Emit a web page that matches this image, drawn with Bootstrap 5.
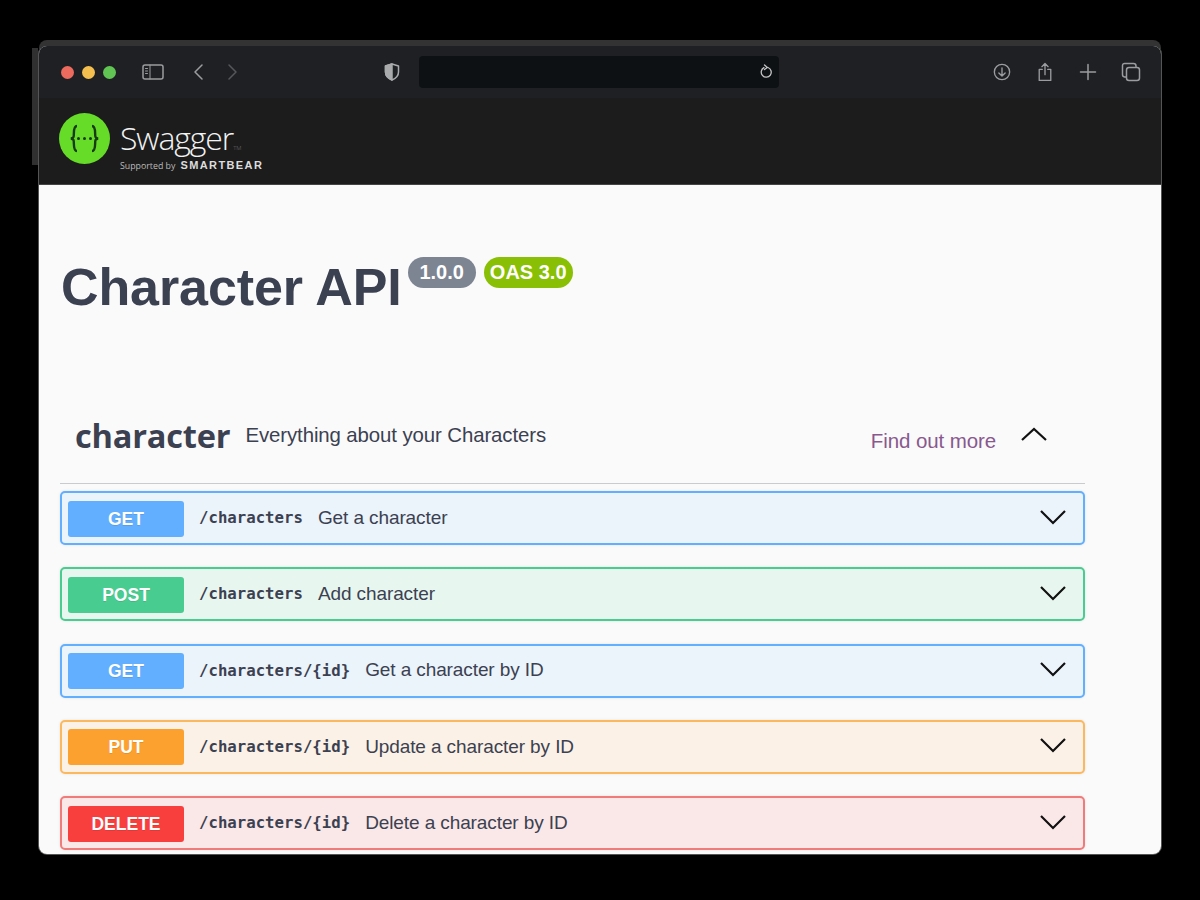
<!DOCTYPE html>
<html lang="en"><head><meta charset="utf-8"><title>Character API</title>
<link rel="stylesheet" href="https://cdn.jsdelivr.net/npm/bootstrap@5.3.0/dist/css/bootstrap.min.css">
<style>
html,body{height:900px;overflow:hidden;background:#000}
body{font-family:"Liberation Sans",Arial,sans-serif;padding:46px 39px 46px}
.win{position:relative;height:808px;border-radius:8px;background:#fafafa;box-shadow:0 -6px 0 #333,0 0 0 1px #555}
.win-edge{position:absolute;left:-7px;top:2px;width:6px;height:117px;background:#303030}
.chrome{height:52px;background:#1e2023;border-radius:8px 8px 0 0;padding-left:22px;padding-right:20px}
.tl{width:13px;height:13px;border-radius:50%}
.tl-r{background:#ec6a5e}.tl-y{background:#f4bf4f}.tl-g{background:#61c554}
.lights{gap:8px;width:56px}
.urlbar{width:360px;height:32px;background:#0e1114;border-radius:4px;padding-right:6px;margin-left:19px}
.ic{display:block;fill:none;stroke:#9a9c9f;stroke-width:1.5;stroke-linecap:round;stroke-linejoin:round}
.slot-a{margin-left:25px}.slot-b{margin-left:29px}.slot-c{margin-left:25px}.slot-d{margin-left:146px}
.right-icons{margin-left:auto}
.ri-1{margin-right:26px}.ri-2{margin-right:26px}.ri-3{margin-right:24px}
.swag{height:87px;background:#1c1c1c;padding:15px 0 0 20px;gap:10px;border-bottom:1px solid #444}
.swag-name{font-family:"Open Sans",sans-serif;font-weight:300;font-size:32px;line-height:32px;letter-spacing:-1.1px;color:#f2f2f2;margin-top:9px}
.swag-name sup{font-size:6px;top:0;letter-spacing:0;color:#777}
.swag-sub{font-family:"Open Sans",sans-serif;font-size:8.8px;line-height:10px;color:#bbb;margin-top:6px;white-space:nowrap}
.swag-sub b{font-family:"Liberation Sans",sans-serif;font-size:11px;letter-spacing:1.4px;color:#ddd;margin-left:5px}
.main-area{padding:69px 76px 0 22px}
.api-head{height:70px}
.api-title{font-size:52px;line-height:64px;font-weight:700;color:#3b4151;margin:0;padding-top:1px;letter-spacing:-.1px}
.chip{height:31px;border-radius:16px;color:#fff;font-weight:700;font-size:20px;line-height:30px;margin-top:3px;white-space:nowrap;text-align:center}
.chip-v{background:#7d8492;margin-left:6px;width:68px}
.chip-o{background:#89bf04;margin-left:8px;width:89px}
.tag-row{height:99px;margin-top:61px;margin-left:-1px;padding:2px 0 0 15px;border-bottom:1px solid #c9cbcf}
.tag-name{font-size:32.600px;font-weight:700;color:#3b4151;font-family:"Open Sans","Liberation Sans",sans-serif;letter-spacing:-.2px;margin:2px 0 0;line-height:40px}
.tag-desc{font-size:20.400px;color:#3b4151;margin-left:15px;letter-spacing:-.1px;line-height:40px}
.more{font-size:20.500px;color:#89588f;text-decoration:none;letter-spacing:-.1px;margin-left:auto;margin-right:25px;margin-top:12px}
.chev{display:block;fill:none;stroke:#111;stroke-width:2.2}
.chev-up{margin-right:38px;margin-top:-2px}
.ops{padding-top:7px;gap:22.250px;margin-left:-1px}
.op{height:54px;border-radius:5px;border:2px solid;padding:0 17px 0 6px;box-shadow:0 0 3px rgba(0,0,0,.1)}
.op-get{background:#ebf3fb;border-color:#61affe}
.op-post{background:#e8f6f0;border-color:#49cc90}
.op-put{background:#fbf1e6;border-color:#fcb85e}
.op-del{background:#fae7e7;border-color:#f07b7b}
.m{width:116px;height:36px;border-radius:3px;color:#fff;font-weight:700;font-size:17.500px;line-height:36px;text-align:center;flex:none;margin-top:1px;text-shadow:0 1px 0 rgba(0,0,0,.1)}
.m-get{background:#61affe}.m-post{background:#49cc90}.m-put{background:#fca130}.m-del{background:#f93e3e}
.path{font-family:"DejaVu Sans Mono","Liberation Mono",monospace;font-weight:700;font-size:15.700px;color:#3b4151;margin-left:15px;white-space:nowrap}
.sum{font-size:19px;color:#3b4151;margin-left:15px;letter-spacing:-.1px;white-space:nowrap}
.op .chev{margin-left:auto;margin-top:-3px}
</style></head><body>
<div class="win d-flex flex-column">
<div class="win-edge"></div>
<div class="chrome d-flex align-items-center">
 <div class="lights d-flex"><span class="tl tl-r"></span><span class="tl tl-y"></span><span class="tl tl-g"></span></div>
 <svg class="ic slot-a" width="22" height="16" viewBox="0 0 22 16"><rect x="1" y="1" width="20" height="14" rx="2"/><path d="M8 1v14M3.500 4.500h2M3.500 7h2M3.500 9.500h2" stroke-width="1"/></svg>
 <svg class="ic slot-b" width="10" height="16" viewBox="0 0 10 16"><path d="M9 1 2 8l7 7"/></svg>
 <svg class="ic slot-c" style="stroke:#55575a" width="10" height="16" viewBox="0 0 10 16"><path d="M1 1l7 7-7 7"/></svg>
 <svg class="ic slot-d" style="stroke:#a8aaac" width="16" height="18" viewBox="0 0 16 18"><path d="M8 1 1.500 3v6c0 4 3 6.500 6.500 8 3.500-1.500 6.500-4 6.500-8V3z"/><path d="M8 1 1.500 3v6c0 4 3 6.500 6.500 8z" fill="#a8aaac"/></svg>
 <div class="urlbar d-flex align-items-center justify-content-end">
  <svg class="ic" style="stroke:#c4c5c6;stroke-width:1.300" width="14" height="16" viewBox="0 0 14 16"><path d="M9 3.500a5 5 0 1 1-4 .2M5.500 1l2.800 2.500-2.800 2"/></svg>
 </div>
 <div class="right-icons d-flex align-items-center">
  <svg class="ic ri-1" width="18" height="18" viewBox="0 0 20 20"><circle cx="10" cy="10" r="8.500"/><path d="M10 5.500v9M6.500 11l3.500 3.500 3.500-3.500"/></svg>
  <svg class="ic ri-2" width="16" height="20" viewBox="0 0 18 22"><path d="M6 8H2.500v12.500h13V8H12M9 14V1.500M5.500 5 9 1.500 12.500 5"/></svg>
  <svg class="ic ri-3" width="18" height="18" viewBox="0 0 18 18"><path d="M9 1.500v15M1.500 9h15"/></svg>
  <svg class="ic" width="20" height="20" viewBox="0 0 20 20"><rect x="5.500" y="5.500" width="13" height="13" rx="2.500"/><path d="M5 15H3.500A2.500 2.500 0 0 1 1.500 12.500V3.500A2 2 0 0 1 3.500 1.500h9A2.500 2.500 0 0 1 15 4v1"/></svg>
 </div>
</div>
<div class="swag d-flex">
 <svg width="51" height="51" viewBox="0 0 51 51"><circle cx="25.500" cy="25.500" r="25.500" fill="#66dc28"/><path d="M18 13c-4.500 0-2.500 9-3.500 11-.5 1-2.500 1.500-2.500 1.500s2 .5 2.500 1.500c1 2-1 11 3.500 11M33 13c4.500 0 2.500 9 3.500 11 .5 1 2.500 1.500 2.500 1.500s-2 .5-2.500 1.500c-1 2 1 11-3.500 11" fill="none" stroke="#173a17" stroke-width="2.400"/><circle cx="19.500" cy="25.500" r="1.500" fill="#173a17"/><circle cx="25.500" cy="25.500" r="1.500" fill="#173a17"/><circle cx="31.500" cy="25.500" r="1.500" fill="#173a17"/></svg>
 <div><div class="swag-name">Swagger<sup>TM</sup></div><div class="swag-sub">Supported by<b>SMARTBEAR</b></div></div>
</div>
<div class="main-area flex-grow-1">
 <div class="api-head d-flex align-items-start">
  <h1 class="api-title">Character API</h1>
  <span class="chip chip-v">1.0.0</span><span class="chip chip-o">OAS 3.0</span>
 </div>
 <div class="tag-row d-flex align-items-center">
  <h2 class="tag-name">character</h2><span class="tag-desc">Everything about your Characters</span>
  <a class="more" href="#">Find out more</a>
  <svg class="chev chev-up" width="26" height="16" viewBox="0 0 26 16"><path d="M1 14 13 3l12 11"/></svg>
 </div>
 <div class="ops d-flex flex-column">
  <div class="op op-get d-flex align-items-center"><span class="m m-get">GET</span><span class="path">/characters</span><span class="sum">Get a character</span><svg class="chev" width="26" height="16" viewBox="0 0 26 16"><path d="M1 2l12 12L25 2"/></svg></div>
  <div class="op op-post d-flex align-items-center"><span class="m m-post">POST</span><span class="path">/characters</span><span class="sum">Add character</span><svg class="chev" width="26" height="16" viewBox="0 0 26 16"><path d="M1 2l12 12L25 2"/></svg></div>
  <div class="op op-get d-flex align-items-center"><span class="m m-get">GET</span><span class="path">/characters/{id}</span><span class="sum">Get a character by ID</span><svg class="chev" width="26" height="16" viewBox="0 0 26 16"><path d="M1 2l12 12L25 2"/></svg></div>
  <div class="op op-put d-flex align-items-center"><span class="m m-put">PUT</span><span class="path">/characters/{id}</span><span class="sum">Update a character by ID</span><svg class="chev" width="26" height="16" viewBox="0 0 26 16"><path d="M1 2l12 12L25 2"/></svg></div>
  <div class="op op-del d-flex align-items-center"><span class="m m-del">DELETE</span><span class="path">/characters/{id}</span><span class="sum">Delete a character by ID</span><svg class="chev" width="26" height="16" viewBox="0 0 26 16"><path d="M1 2l12 12L25 2"/></svg></div>
 </div>
</div>
</div>
<script src="https://cdn.jsdelivr.net/npm/bootstrap@5.3.0/dist/js/bootstrap.bundle.min.js"></script>
</body></html>
